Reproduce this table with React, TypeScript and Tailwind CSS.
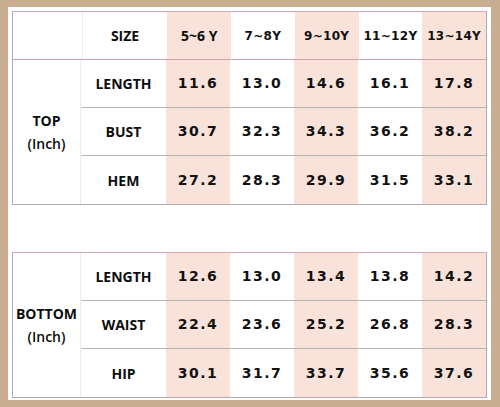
import React from "react";

const sizes = ["5~6 Y", "7~8Y", "9~10Y", "11~12Y", "13~14Y"];

const top = [
  { name: "LENGTH", vals: ["11.6", "13.0", "14.6", "16.1", "17.8"] },
  { name: "BUST", vals: ["30.7", "32.3", "34.3", "36.2", "38.2"] },
  { name: "HEM", vals: ["27.2", "28.3", "29.9", "31.5", "33.1"] },
];

const bottom = [
  { name: "LENGTH", vals: ["12.6", "13.0", "13.4", "13.8", "14.2"] },
  { name: "WAIST", vals: ["22.4", "23.6", "25.2", "26.8", "28.3"] },
  { name: "HIP", vals: ["30.1", "31.7", "33.7", "35.6", "37.6"] },
];

const label = "font-['Open_Sans',sans-serif] font-bold text-[14px] text-[#0d0d0d]";
const num = "font-['DejaVu_Sans',sans-serif] font-bold text-[14px] tracking-[1.5px] text-[#111]";

function Row({ name, vals, last }: { name: string; vals: string[]; last: boolean }) {
  return (
    <div className={`flex h-12 ${last ? "" : "border-b border-[#b8b4b6]"}`}>
      <div className={`w-[85px] flex items-center justify-center ${label}`}>{name}</div>
      {vals.map((v, i) => (
        <div
          key={i}
          className={`w-16 flex items-center justify-center ${num} ${i % 2 === 0 ? "bg-[#f8e2d9]" : ""}`}
        >
          {v}
        </div>
      ))}
    </div>
  );
}

function Group({ title, rows }: { title: string; rows: typeof top }) {
  return (
    <div className="flex">
      <div className="w-[70px] flex flex-col items-center justify-center border-r border-[#eeeaea] leading-[23px]">
        <div className={label}>{title}</div>
        <div className="font-['Open_Sans',sans-serif] font-semibold text-[14px] text-[#0d0d0d]">(Inch)</div>
      </div>
      <div className="flex flex-col">
        {rows.map((r, i) => (
          <Row key={r.name} name={r.name} vals={r.vals} last={i === rows.length - 1} />
        ))}
      </div>
    </div>
  );
}

export default function App() {
  return (
    <div className="w-[500px] h-[407px] bg-[#c9ad90] pl-2 pt-[7px]">
      <div className="w-[483px] h-[393px] bg-white pl-1 pt-1 flex flex-col">
        <div className="w-[475px] border border-[#b6a8b4] border-t-[#d9a9b4]">
          <div className="flex h-[48px] border-b border-[#d9a0aa]">
            <div className="w-[70px] border-r border-[#eeeaea]" />
            <div className={`w-[85px] flex items-center justify-center ${label}`}>SIZE</div>
            {sizes.map((s, i) => (
              <div
                key={s}
                className={`w-16 flex items-center justify-center ${i === 0 ? label : "font-['DejaVu_Sans',sans-serif] font-bold text-[12px] tracking-[0.3px] text-[#111]"} ${i % 2 === 0 ? "bg-[#f8e2d9]" : ""}`}
              >
                {s}
              </div>
            ))}
          </div>
          <Group title="TOP" rows={top} />
        </div>
        <div className="w-[475px] mt-[47px] border border-[#b6a8b4] border-t-[#d9a9b4]">
          <Group title="BOTTOM" rows={bottom} />
        </div>
      </div>
    </div>
  );
}
